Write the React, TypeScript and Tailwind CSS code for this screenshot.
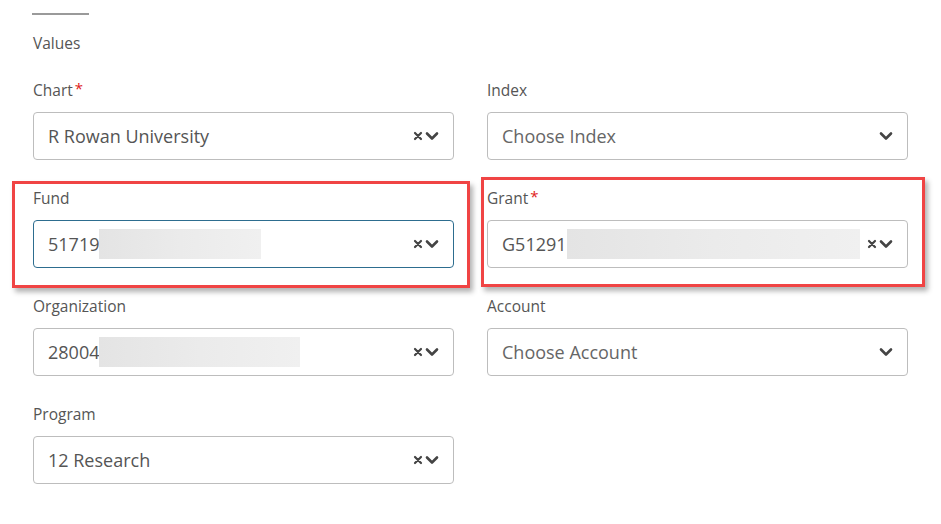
import React from 'react'

type Field = {
  label: string
  required?: boolean
  value?: string
  placeholder?: string
  blur?: number
  focused?: boolean
}

function XIcon() {
  return (
    <svg width="10" height="10" viewBox="0 0 10 10" className="text-[#444]">
      <path d="M2 2 L8 8 M8 2 L2 8" stroke="currentColor" strokeWidth="2.2" strokeLinecap="round" />
    </svg>
  )
}

function Chevron() {
  return (
    <svg width="14" height="10" viewBox="0 0 14 10" className="text-[#444]">
      <path d="M2 2.5 L7 7.5 L12 2.5" stroke="currentColor" strokeWidth="2.6" fill="none" strokeLinecap="round" strokeLinejoin="round" />
    </svg>
  )
}

function SelectField({ f }: { f: Field }) {
  return (
    <div className="flex flex-col">
      <label className="h-5 mb-3 text-[15.5px] leading-5 font-medium text-[#555] flex items-start">
        {f.label}
        {f.required && <span className="text-[#e02020] ml-[2px] text-[15px] leading-4">*</span>}
      </label>
      <div
        className={`h-12 w-[421px] rounded flex items-center pl-[14px] pr-[14px] bg-white border ${
          f.focused ? 'border-[#2d6d8f]' : 'border-[#bdbdbd]'
        }`}
      >
        <div className="flex-1 flex items-center min-w-0">
          {f.value ? (
            <span className="text-[18px] text-[#555]">{f.value}</span>
          ) : (
            <span className="text-[18px] text-[#666]">{f.placeholder}</span>
          )}
          {f.blur ? (
            <div
              className="h-[30px] bg-gradient-to-r from-[#e4e4e4] via-[#ebebeb] to-[#f0f0f0]"
              style={{ width: f.blur }}
            />
          ) : null}
        </div>
        <div className="flex items-center gap-[2px]">
          {f.value && <XIcon />}
          <Chevron />
        </div>
      </div>
    </div>
  )
}

export default function App() {
  const left: Field[] = [
    { label: 'Chart', required: true, value: 'R Rowan University' },
    { label: 'Fund', value: '51719', blur: 162, focused: true },
    { label: 'Organization', value: '28004', blur: 201 },
    { label: 'Program', value: '12 Research' },
  ]
  const right: Field[] = [
    { label: 'Index', placeholder: 'Choose Index' },
    { label: 'Grant', required: true, value: 'G51291', blur: 293 },
    { label: 'Account', placeholder: 'Choose Account' },
  ]

  return (
    <div className="relative w-[941px] h-[524px] bg-white overflow-hidden font-['Open_Sans',sans-serif]">
      <div className="pl-[33px] pt-[13px]">
        <div className="w-[57px] h-[2px] bg-[#9a9a9a] -ml-px" />
        <div className="mt-[18px] h-5 text-[15.5px] leading-5 font-medium text-[#555]">Values</div>

        <div className="mt-[27px] grid grid-cols-[420px_420px] gap-x-[34px] gap-y-7">
          {[0, 1, 2, 3].map((i) => (
            <React.Fragment key={i}>
              <SelectField f={left[i]} />
              {right[i] ? <SelectField f={right[i]} /> : <div />}
            </React.Fragment>
          ))}
        </div>
      </div>

      {/* annotation boxes */}
      <div className="absolute left-[12px] top-[181px] w-[458px] h-[107px] border-[3px] border-[#f04444] shadow-[3px_4px_5px_rgba(0,0,0,0.3)]" />
      <div className="absolute left-[481px] top-[177px] w-[444px] h-[110px] border-[3px] border-[#f04444] shadow-[3px_4px_5px_rgba(0,0,0,0.3)]" />
    </div>
  )
}
